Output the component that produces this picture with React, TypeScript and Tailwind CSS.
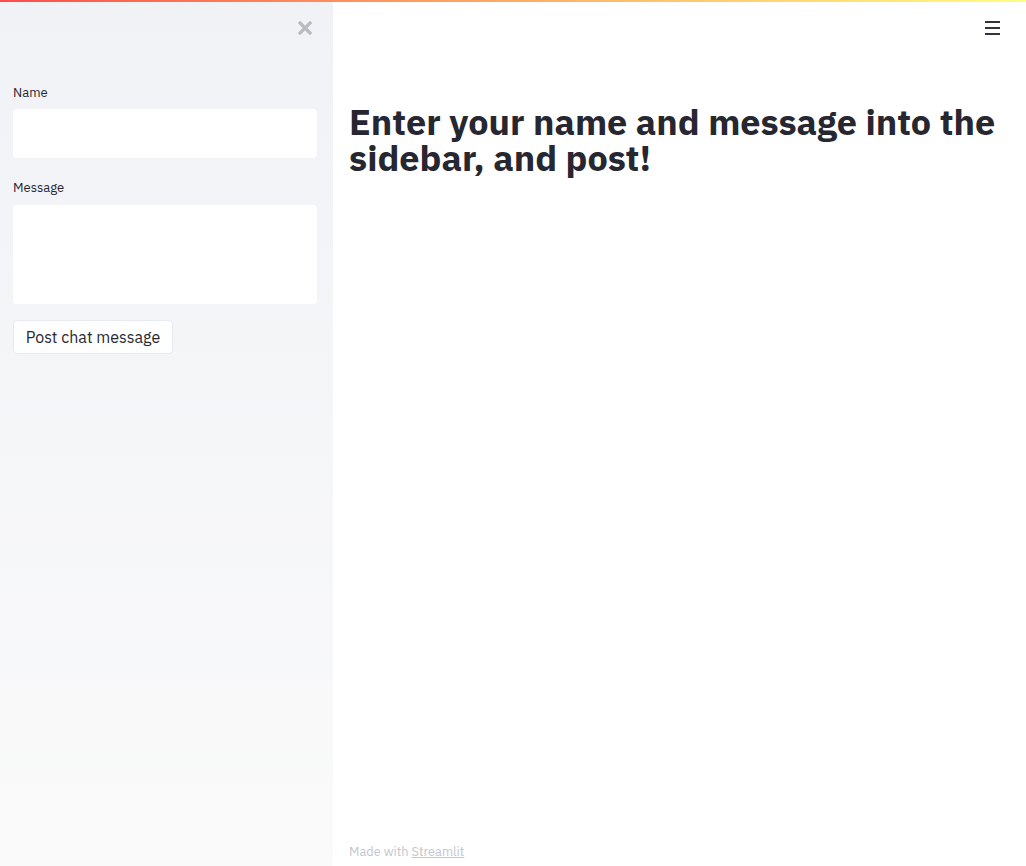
import React from "react";

export default function App() {
  const font = { fontFamily: '"IBM Plex Sans", Roboto, "Liberation Sans", sans-serif' };
  return (
    <div className="relative h-[866px] w-[1026px] overflow-hidden bg-white text-[#262730]" style={font}>
      <div className="absolute left-0 right-0 top-0 z-10 h-[2px] bg-gradient-to-r from-[#ff4b4b] to-[#fffd80]" />
      <div className="flex h-full">
        <aside className="flex h-full w-[333px] shrink-0 flex-col bg-gradient-to-b from-[#f0f2f6] to-[#fafafa] pl-[13px] pr-[16px]">
          <div className="flex h-[56px] items-start justify-end pt-[21px] pr-[5px]">
            <svg width="14" height="14" viewBox="0 0 14 14">
              <path d="M2 2 L12 12 M12 2 L2 12" stroke="#b8bbc2" strokeWidth="3.2" strokeLinecap="square" />
            </svg>
          </div>
          <label className="mt-[28px] block text-[13px] leading-[18px]">Name</label>
          <div className="mt-[7px] h-[49px] w-full rounded-[4px] bg-white" />
          <label className="mt-[21px] block text-[13px] leading-[18px]">Message</label>
          <div className="mt-[8px] h-[99px] w-full rounded-[4px] bg-white" />
          <div className="mt-[16px]">
            <button className="h-[34px] w-[160px] rounded-[4px] border border-[#e6e9ef] bg-white text-[16px] text-[#262730]">
              Post chat message
            </button>
          </div>
        </aside>
        <main className="relative flex flex-1 flex-col px-[16px]">
          <div className="absolute right-[26px] top-[21px] flex flex-col gap-[4px]">
            <div className="h-[2px] w-[15px] bg-[#31333f]" />
            <div className="h-[2px] w-[15px] bg-[#31333f]" />
            <div className="h-[2px] w-[15px] bg-[#31333f]" />
          </div>
          <h1 className="mt-[104px] text-[36px] font-bold leading-[36px] text-[#262730]">
            Enter your name and message into the sidebar, and post!
          </h1>
          <div className="flex-1" />
          <div className="pb-[5px] text-[12.8px] text-[#c4c6cf]">
            Made with <span className="underline">Streamlit</span>
          </div>
        </main>
      </div>
    </div>
  );
}
